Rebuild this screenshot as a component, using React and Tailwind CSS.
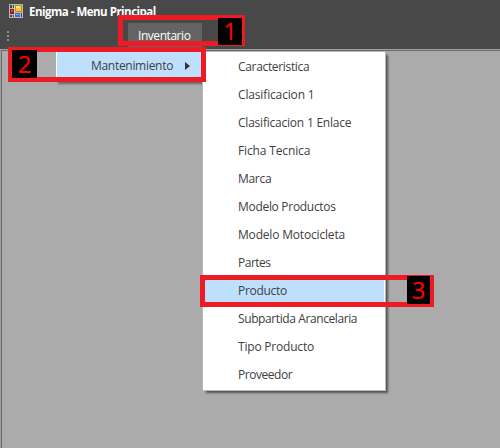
const entries = [
  ['Caracteristica', 'tracking-[-0.33px]'],
  ['Clasificacion 1', 'tracking-[-0.15px]'],
  ['Clasificacion 1 Enlace', 'tracking-[-0.22px]'],
  ['Ficha Tecnica', 'tracking-[-0.14px]'],
  ['Marca', 'tracking-[-0.3px]'],
  ['Modelo Productos', 'tracking-[-0.3px]'],
  ['Modelo Motocicleta', 'tracking-[-0.18px]'],
  ['Partes', 'tracking-[-0.5px]'],
  ['Producto', 'tracking-[-0.3px]'],
  ['Subpartida Arancelaria', 'tracking-[-0.4px]'],
  ['Tipo Producto', 'tracking-[-0.2px]'],
  ['Proveedor', 'tracking-[-0.45px]'],
];

function AppIcon() {
  return (
    <svg width="14" height="14" viewBox="0 0 14 14" shapeRendering="crispEdges">
      <path fill="#b8b8b8" d="M0 0h14v14H0z" />
      <path fill="#484848" d="M1 1h2v3H1zM4 1h1v3H4zM1 11h2v2H1zM4 11h1v2H4zM12 9h1v4h-1z" />
      <path fill="#d0d0d0" d="M5 1h1v12H5z" />
      <path fill="#c98d12" d="M6 1h7v7H6z" />
      <path fill="#f8c83a" d="M7 2h5v5H7z" />
      <path fill="#ffe891" d="M7 2h4v2H7z" />
      <path fill="#8f1b18" d="M1 5h4v5H1z" />
      <path fill="#d64b3c" d="M2 6h2v2H2z" />
      <path fill="#386fce" d="M6 9h5v4H6z" />
      <path fill="#79aef6" d="M7 10h3v1H7z" />
    </svg>
  );
}

function Step({ frame, badge, number }) {
  return (
    <div className={`absolute z-20 border-[#ed1c24] ${frame}`}>
      <span className={`absolute flex items-center justify-center bg-black pb-px font-['Noto_Sans','Open_Sans',sans-serif] text-[24px] leading-none text-[#ff0000] ${badge}`}>
        {number}
      </span>
    </div>
  );
}

export default function App() {
  return (
    <div className="relative flex h-[448px] w-[500px] flex-col overflow-hidden bg-[#484848] font-['Open_Sans','Noto_Sans',sans-serif] text-[12px]">
      <header className="flex h-[23px] shrink-0 items-start gap-[6px] pl-[9px] pt-[4px] text-white">
        <AppIcon />
        <span className="whitespace-nowrap text-[11.5px] font-bold leading-[16px] tracking-[-0.5px]">Enigma - Menu Principal</span>
      </header>
      <nav className="flex h-[26px] shrink-0 items-start">
        <div className="flex w-[128px] flex-col gap-[2px] pl-[7px] pt-[8px]">
          <i className="size-[2px] bg-[#8e8e8e]" />
          <i className="size-[2px] bg-[#8e8e8e]" />
          <i className="size-[2px] bg-[#8e8e8e]" />
        </div>
        <div className="flex h-[24px] w-[74px] items-center bg-[#646464] pl-[10px] pt-[2px] tracking-[-0.45px] text-white">Inventario</div>
      </nav>
      <main className="flex-1 border-l border-t border-[#a0a0a0]">
        <div className="h-full border-l border-t border-[#696969] bg-[#ababab]" />
      </main>

      <div className="absolute left-[56px] top-[50px] flex h-[32px] w-[146px] items-center border border-white bg-[#bfdffe] pl-[34px] text-[#404040] shadow-[2px_2px_2px_#666]">
        <span className="w-[94px] tracking-[-0.3px]">Mantenimiento</span>
        <svg width="5" height="8" viewBox="0 0 5 8"><path d="M0 0l5 4-5 4z" fill="#333" /></svg>
      </div>

      <div className="absolute left-[202px] top-[51px] h-[340px] w-[184px] border border-[#b8b8b8] bg-white pt-px text-[#404040] shadow-[3px_3px_2px_-1px_#555]">
        {entries.map(([label, spacing]) => (
          <div key={label} className={`mx-px flex h-[28px] items-center whitespace-nowrap pl-[34px] ${spacing} ${label === 'Producto' ? 'bg-[#bfdffe]' : ''}`}>
            {label}
          </div>
        ))}
      </div>

      <Step number="1" frame="left-[118px] top-[15px] h-[31px] w-[127px] border-[5px]" badge="left-[95px] top-[-2px] h-[27px] w-[24px]" />
      <Step number="2" frame="left-[8px] top-[47px] h-[35px] w-[198px] border-[5px]" badge="left-[-1px] top-[-2px] h-[28px] w-[25px]" />
      <Step number="3" frame="left-[200px] top-[275px] h-[32px] w-[234px] border-[5px]" badge="left-[202px] top-[-4px] h-[28px] w-[23px]" />
    </div>
  );
}
